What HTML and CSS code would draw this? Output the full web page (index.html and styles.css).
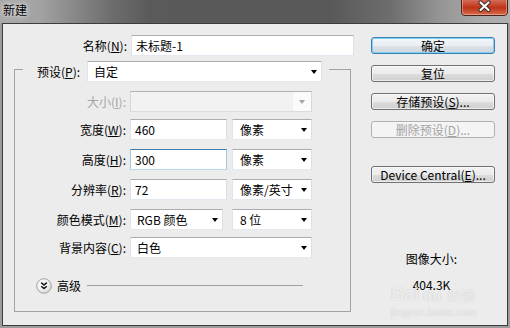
FILE: index.html
```html
<!DOCTYPE html>
<html>
<head>
<meta charset="utf-8">
<link rel="stylesheet" href="styles.css">
</head>
<body>
<div class="window">
  <div class="titlebar">
    <span class="title">新建</span>
    <div class="close">
      <svg width="47" height="16" viewBox="0 0 47 16">
        <defs>
          <linearGradient id="cg" x1="0" y1="0" x2="0" y2="1">
            <stop offset="0" stop-color="#d98a78"/>
            <stop offset="0.45" stop-color="#c8472e"/>
            <stop offset="0.6" stop-color="#bd3419"/>
            <stop offset="1" stop-color="#dc6e4e"/>
          </linearGradient>
        </defs>
        <rect x="0.5" y="-4" width="46" height="19.5" rx="3.5" fill="url(#cg)" stroke="#4a2118"/>
        <rect x="1.5" y="-4" width="44" height="18.5" rx="2.5" fill="none" stroke="rgba(255,255,255,0.35)"/>
        <path d="M19.5 2.5 L27.5 10 M27.5 2.5 L19.5 10" stroke="#3b2a26" stroke-width="4.2" stroke-linecap="round"/>
        <path d="M19.5 2.5 L27.5 10 M27.5 2.5 L19.5 10" stroke="#ffffff" stroke-width="2.2" stroke-linecap="round"/>
      </svg>
    </div>
  </div>
  <div class="dialog">
    <div class="left">
      <div class="name-row">
        <span class="lbl name-lbl">名称(<u>N</u>):</span>
        <div class="field name-field">未标题-1</div>
      </div>
      <div class="group">
        <div class="group-head">
          <span class="lbl">预设(<u>P</u>):</span>
          <div class="field select preset">自定<span class="arrow"></span></div>
        </div>
        <div class="rows">
          <div class="row">
            <span class="lbl row-lbl disabled">大小(<u>I</u>):</span>
            <div class="field select wide disabled-field"><span class="arrow-box"><span class="arrow gray"></span></span></div>
          </div>
          <div class="row">
            <span class="lbl row-lbl">宽度(<u>W</u>):</span>
            <div class="field num">460</div>
            <div class="field select unit">像素<span class="arrow"></span></div>
          </div>
          <div class="row">
            <span class="lbl row-lbl">高度(<u>H</u>):</span>
            <div class="field num focused">300</div>
            <div class="field select unit">像素<span class="arrow"></span></div>
          </div>
          <div class="row">
            <span class="lbl row-lbl">分辨率(<u>R</u>):</span>
            <div class="field num">72</div>
            <div class="field select unit">像素/英寸<span class="arrow"></span></div>
          </div>
          <div class="row">
            <span class="lbl row-lbl">颜色模式(<u>M</u>):</span>
            <div class="field select mode">RGB 颜色<span class="arrow"></span></div>
            <div class="field select unit unit-far">8 位<span class="arrow"></span></div>
          </div>
          <div class="row">
            <span class="lbl row-lbl">背景内容(<u>C</u>):</span>
            <div class="field select wide">白色<span class="arrow"></span></div>
          </div>
        </div>
        <div class="advanced">
          <svg class="adv-icon" width="16" height="16" viewBox="0 0 16 16">
            <defs>
              <radialGradient id="ag" cx="0.4" cy="0.35" r="0.7">
                <stop offset="0" stop-color="#ffffff"/>
                <stop offset="0.6" stop-color="#f0f0f0"/>
                <stop offset="1" stop-color="#cfcfcf"/>
              </radialGradient>
            </defs>
            <circle cx="8" cy="8" r="7.3" fill="url(#ag)" stroke="#a3a3a3"/>
            <path d="M5.2 4.6 L8 7 L10.8 4.6 M5.2 8.2 L8 10.6 L10.8 8.2" fill="none" stroke="#111" stroke-width="1.5"/>
          </svg>
          <span class="adv-text">高级</span>
          <span class="adv-line"></span>
        </div>
      </div>
    </div>
    <div class="right">
      <div class="btn default">确定</div>
      <div class="btn">复位</div>
      <div class="btn">存储预设(<u>S</u>)...</div>
      <div class="btn btn-disabled">删除预设(<u>D</u>)...</div>
      <div class="btn btn-dc">Device Central(<u>E</u>)...</div>
      <div class="size-info">
        <div class="size-label">图像大小:</div>
        <div class="size-value">404.3K</div>
      </div>
    </div>
  </div>
  <div class="watermark">
    <div class="wm-logo"><span class="wm-bai">Bai</span><span class="wm-du">du</span><span class="wm-cn">经验</span></div>
    <div class="wm-url">jingyan.baidu.com</div>
  </div>
</div>
</body>
</html>
```

FILE: styles.css
```css
* { box-sizing: border-box; }

body {
  margin: 0;
  width: 510px;
  height: 328px;
  overflow: hidden;
  background: #9a9a9a;
  font-family: "Noto Sans CJK SC", "Noto Sans", sans-serif;
  font-size: 12px;
  color: #000;
}

u { text-decoration: underline; text-underline-offset: 1px; }

.window {
  position: relative;
  width: 510px;
  height: 328px;
  background: #9c9c9c;
}

.titlebar {
  height: 23px;
  display: flex;
  align-items: flex-start;
  background: linear-gradient(to right, #a9a9a9 0px, #a2a2a2 40px, #6e6e6e 110px, #5a5a5a 150px, #595959 330px, #6d6d6d 390px, #959595 440px, #a9a9a9 480px, #b0b0b0 510px);
}

.title {
  margin: 2px 0 0 3px;
  line-height: 16px;
  font-size: 12px;
  text-shadow: 0 0 4px rgba(255,255,255,0.9), 0 0 8px rgba(255,255,255,0.6);
}

.close {
  margin-left: auto;
  margin-right: 2px;
  width: 47px;
  height: 16px;
}
.close svg { display: block; }

.dialog {
  margin: 0 2px;
  height: 303px;
  border: 1px solid #3c3c3c;
  background: #ececec;
  display: flex;
}

.left {
  width: 351px;
  padding-top: 11px;
}

.lbl { white-space: nowrap; line-height: 16px; }

.name-row {
  display: flex;
  align-items: center;
  height: 21px;
}
.name-lbl { width: 124px; text-align: right; margin-right: 4px; }

.field {
  height: 21px;
  background: #fff;
  border: 1px solid;
  border-color: #abadb3 #dbdfe6 #e3e9ef #e2e3ea;
  display: flex;
  align-items: center;
  padding: 0 4px 0 4px;
  line-height: 16px;
  white-space: nowrap;
}
.name-field { width: 223px; }

.select { padding-left: 6px; }
.arrow {
  margin-left: auto;
  width: 0;
  height: 0;
  border-left: 3.5px solid transparent;
  border-right: 3.5px solid transparent;
  border-top: 4px solid #000;
}
.arrow.gray { border-top-color: #a6a6a6; margin: 0 auto; }

.group {
  margin: 13px 0 0 11px;
  width: 337px;
  height: 243px;
  border: 1px solid #a3a3a3;
}

.group-head {
  display: flex;
  align-items: center;
  margin: -9px 0 0 8px;
  width: 306px;
  height: 21px;
  padding: 0 7px 0 14px;
  background: #ececec;
}
.preset { width: 235px; margin-left: auto; }

.rows {
  margin-top: 9px;
  display: grid;
  grid-template-rows: 28px 30px 30px 30px 28px 21px;
}
.row {
  display: flex;
  align-items: flex-start;
  height: 21px;
}
.row .lbl { align-self: center; }
.row-lbl { width: 111px; text-align: right; margin-right: 4px; }
.disabled { color: #a6a6a6; }

.wide { width: 182px; }
.num { width: 97px; }
.unit { width: 80px; margin-left: 5px; padding-left: 7px; }
.mode { width: 93px; }
.unit-far { margin-left: 9px; }

.focused { border-color: #3d7bad #a4c9e3 #b7d9ed #a4c9e3; }

.disabled-field {
  background: #f2f2f2;
  border-color: #adb2b5 #d5d7d9 #dadcde #d5d7d9;
  padding: 0;
  justify-content: flex-end;
}
.arrow-box {
  width: 18px;
  height: 19px;
  background: #fbfbfb;
  display: flex;
  align-items: center;
}

.advanced {
  display: flex;
  align-items: center;
  margin: 20px 47px 0 21px;
  height: 16px;
}
.adv-icon { display: block; flex: none; }
.adv-text { margin-left: 5px; line-height: 16px; }
.adv-line {
  flex: 1;
  height: 1px;
  margin-left: 6px;
  margin-top: -2px;
  background: #a0a0a0;
}

.right {
  width: 124px;
  margin-left: 17px;
  padding-top: 13px;
  display: flex;
  flex-direction: column;
  gap: 11px;
}

.btn {
  height: 17px;
  border: 1px solid #707070;
  border-radius: 3px;
  background: linear-gradient(to bottom, #f2f2f2 0%, #ebebeb 50%, #dddddd 51%, #cfcfcf 100%);
  box-shadow: inset 0 0 0 1px rgba(255,255,255,0.6);
  display: flex;
  align-items: center;
  justify-content: center;
  line-height: 15px;
  white-space: nowrap;
}
.btn.default {
  border-color: #3c7fb1;
  box-shadow: inset 0 0 0 1px #7fd0f5;
  background: linear-gradient(to bottom, #f3f7fa 0%, #eaeef2 50%, #dde3e8 51%, #cfd6dc 100%);
}
.btn-disabled {
  border-color: #adb2b5;
  background: #f4f4f4;
  color: #a3a3a3;
  box-shadow: none;
}
.btn-dc { margin-top: 17px; }

.size-info {
  margin-top: 57px;
  text-align: center;
  padding-right: 3px;
}
.size-label { line-height: 16px; }
.size-value { line-height: 10px; margin-top: 13px; }

.watermark {
  position: absolute;
  left: 391px;
  top: 288px;
  color: rgba(255,255,255,0.72);
  text-shadow: 0 0 1px rgba(150,150,150,0.6);
  pointer-events: none;
}
.wm-logo {
  display: flex;
  align-items: flex-end;
  height: 13px;
}
.wm-bai {
  font-family: "Liberation Sans", sans-serif;
  font-weight: bold;
  font-size: 18px;
  line-height: 13px;
}
.wm-du {
  font-family: "Liberation Sans", sans-serif;
  font-weight: bold;
  font-size: 15px;
  line-height: 11px;
  margin-left: 4px;
}
.wm-cn {
  font-size: 14px;
  line-height: 12px;
  margin-left: 6px;
}
.wm-url {
  font-family: "Liberation Sans", sans-serif;
  font-size: 10px;
  line-height: 10px;
  margin-top: 7px;
  letter-spacing: 0.3px;
}
```
